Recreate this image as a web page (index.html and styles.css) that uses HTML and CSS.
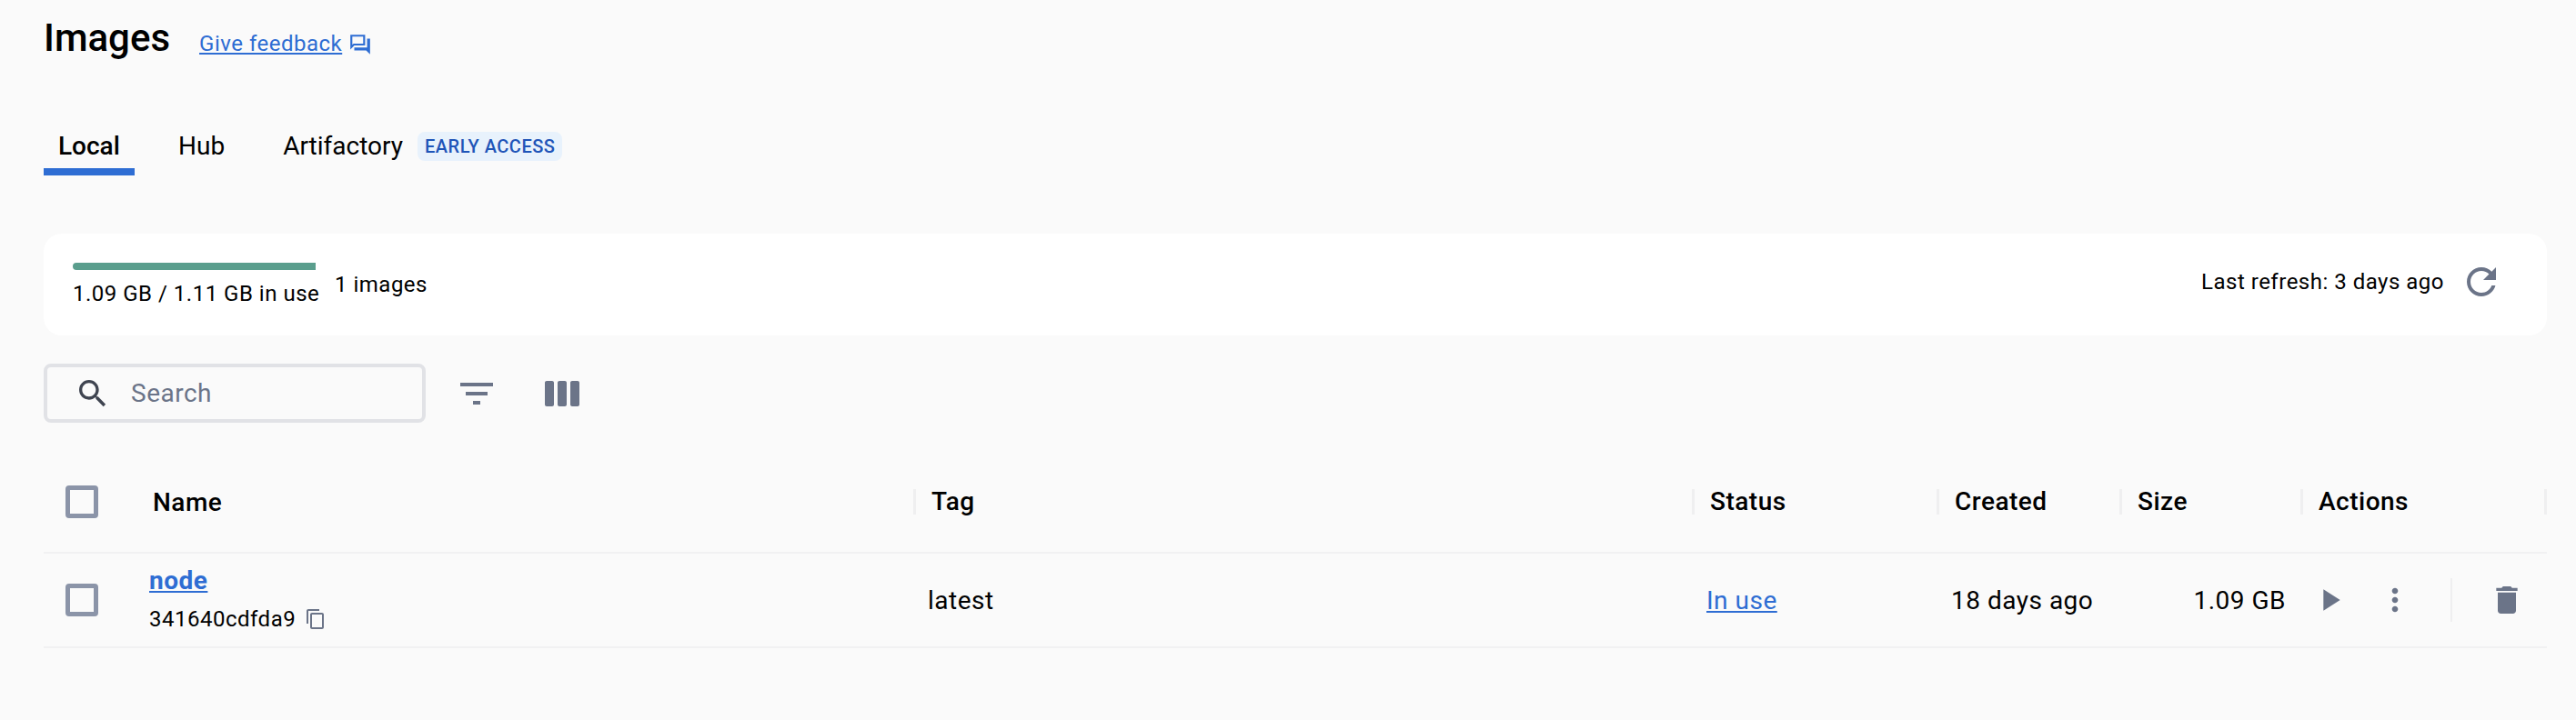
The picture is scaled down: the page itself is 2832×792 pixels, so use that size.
FILE: index.html
```html
<!DOCTYPE html>
<html lang="en">
<head>
<meta charset="utf-8">
<title>Images</title>
<link rel="stylesheet" href="styles.css">
</head>
<body>
<main class="page">
  <header class="title-row">
    <h1 class="title">Images</h1>
    <a class="feedback" href="#">Give feedback</a>
    <svg class="icon feedback-icon" viewBox="0 0 24 24"><path d="M15 4v7H5.17L4 12.17V4h11m2-2H2v15l4-4h11V2zm5 4h-3v9H6v3h12l4 4V6z"/></svg>
  </header>

  <nav class="tabs">
    <a class="tab tab-active" href="#">Local</a>
    <a class="tab" href="#">Hub</a>
    <a class="tab tab-last" href="#">Artifactory</a>
    <span class="badge">EARLY ACCESS</span>
  </nav>

  <section class="usage-card">
    <div class="usage">
      <div class="usage-bar"></div>
      <div class="usage-text">1.09 GB / 1.11 GB in use</div>
    </div>
    <div class="usage-count">1 images</div>
    <div class="refresh">
      <span class="refresh-text">Last refresh: 3 days ago</span>
      <svg class="icon refresh-icon" viewBox="0 0 24 24"><path d="M17.65 6.35C16.2 4.9 14.21 4 12 4c-4.42 0-7.99 3.58-7.99 8s3.57 8 7.99 8c3.73 0 6.84-2.55 7.73-6h-2.08c-.82 2.33-3.04 4-5.65 4-3.31 0-6-2.69-6-6s2.69-6 6-6c1.66 0 3.14.69 4.22 1.78L13 11h7V4l-2.35 2.35z"/></svg>
    </div>
  </section>

  <section class="toolbar">
    <div class="search">
      <svg class="icon search-icon" viewBox="0 0 24 24"><path d="M15.5 14h-.79l-.28-.27C15.41 12.59 16 11.11 16 9.5 16 5.91 13.09 3 9.5 3S3 5.91 3 9.5 5.91 16 9.5 16c1.61 0 3.09-.59 4.23-1.57l.27.28v.79l5 4.99L20.49 19l-4.99-5zm-6 0C7.01 14 5 11.99 5 9.5S7.01 5 9.5 5 14 7.01 14 9.5 11.99 14 9.5 14z"/></svg>
      <span class="search-text">Search</span>
    </div>
    <svg class="icon tool-icon" viewBox="0 0 24 24"><path d="M10 18h4v-2h-4v2zM3 6v2h18V6H3zm3 7h12v-2H6v2z"/></svg>
    <svg class="icon tool-icon tool-columns" viewBox="0 0 24 24"><path d="M6 5H3c-.55 0-1 .45-1 1v12c0 .55.45 1 1 1h3c.55 0 1-.45 1-1V6c0-.55-.45-1-1-1zm14 0h-3c-.55 0-1 .45-1 1v12c0 .55.45 1 1 1h3c.55 0 1-.45 1-1V6c0-.55-.45-1-1-1zm-7 0h-3c-.55 0-1 .45-1 1v12c0 .55.45 1 1 1h3c.55 0 1-.45 1-1V6c0-.55-.45-1-1-1z"/></svg>
  </section>

  <section class="table">
    <div class="row head-row">
      <div class="cell cell-check"><span class="checkbox"></span><span class="head-name">Name</span></div>
      <div class="cell head-cell">Tag</div>
      <div class="cell head-cell">Status</div>
      <div class="cell head-cell">Created</div>
      <div class="cell head-cell">Size</div>
      <div class="cell head-cell head-last">Actions</div>
    </div>
    <div class="row body-row">
      <div class="cell cell-check">
        <span class="checkbox"></span>
        <div class="name-block">
          <a class="name-link" href="#">node</a>
          <div class="image-id">341640cdfda9
            <svg class="icon copy-icon" viewBox="0 0 24 24"><path d="M16 1H4c-1.1 0-2 .9-2 2v14h2V3h12V1zm3 4H8c-1.1 0-2 .9-2 2v14c0 1.1.9 2 2 2h11c1.1 0 2-.9 2-2V7c0-1.1-.9-2-2-2zm0 16H8V7h11v14z"/></svg>
          </div>
        </div>
      </div>
      <div class="cell body-cell">latest</div>
      <div class="cell body-cell"><a class="status-link" href="#">In use</a></div>
      <div class="cell body-cell">18 days ago</div>
      <div class="cell body-cell cell-size">1.09 GB</div>
      <div class="cell cell-actions">
        <svg class="icon action-icon action-play" viewBox="0 0 24 24"><path d="M8 5v14l11-7z"/></svg>
        <svg class="icon action-icon action-more" viewBox="0 0 24 24"><path d="M12 8c1.1 0 2-.9 2-2s-.9-2-2-2-2 .9-2 2 .9 2 2 2zm0 2c-1.1 0-2 .9-2 2s.9 2 2 2 2-.9 2-2-.9-2-2-2zm0 6c-1.1 0-2 .9-2 2s.9 2 2 2 2-.9 2-2-.9-2-2-2z"/></svg>
        <span class="action-divider"></span>
        <svg class="icon action-icon action-delete" viewBox="0 0 24 24"><path d="M6 19c0 1.1.9 2 2 2h8c1.1 0 2-.9 2-2V7H6v12zM19 4h-3.5l-1-1h-5l-1 1H5v2h14V4z"/></svg>
      </div>
    </div>
  </section>
</main>
</body>
</html>
```
FILE: styles.css
```css
* { box-sizing: border-box; }
html, body { margin: 0; padding: 0; background: #fafafa; }
body { font-family: Roboto, "Liberation Sans", sans-serif; color: #000; height: 792px; overflow: hidden; }
a { color: #2e6dd3; }
.icon { display: block; fill: #6b7488; flex: none; }
.page { padding: 0 32px 0 48px; }

.title-row { display: flex; align-items: center; height: 84px; }
.title { margin: 0 32px 0 0; font-size: 42px; font-weight: 500; line-height: 84px; }
.feedback { font-size: 24px; letter-spacing: .5px; margin-top: 12px; }
.feedback-icon { width: 26px; height: 26px; fill: #2e6dd3; margin: 14px 0 0 7px; }

.tabs { display: flex; align-items: center; height: 64px; margin-top: 45px; }
.tab { font-size: 28px; color: #000; text-decoration: none; line-height: 64px; height: 64px; padding: 0 16px; margin-right: 32px; }
.tab-active { font-weight: 500; width: 100px; border-bottom: 8px solid #2e6dd3; }
.tab-last { padding-right: 0; margin: 0 16px 0 0; }
.badge { background: #e8f2fc; color: #1f55b8; font-size: 20px; font-weight: 500; letter-spacing: .5px; border-radius: 8px; padding: 0 8px; line-height: 32px; }

.usage-card { display: flex; align-items: flex-start; height: 112px; margin-top: 64px; padding: 32px 0 0 32px; background: #fff; border-radius: 20px; }
.usage { width: 284px; }
.usage-bar { width: 267px; height: 8px; background: #5a9e8d; border-radius: 4px 0 0 4px; }
.usage-text { font-size: 24px; letter-spacing: .5px; line-height: 36px; margin-top: 8px; white-space: nowrap; }
.usage-count { font-size: 24px; letter-spacing: .5px; line-height: 36px; margin-top: 6px; margin-left: 4px; }
.refresh { margin-left: auto; display: flex; align-items: center; margin-top: -3px; }
.refresh-text { font-size: 24px; letter-spacing: .5px; }
.refresh-icon { width: 48px; height: 48px; margin: 0 48px 0 17px; }

.toolbar { display: flex; align-items: center; margin-top: 31px; }
.search { display: flex; align-items: center; width: 420px; height: 65px; border: 4px solid #e1e2e6; border-radius: 8px; padding-left: 30px; }
.search-icon { width: 40px; height: 40px; fill: #3f4450; }
.search-text { font-size: 28px; letter-spacing: .5px; color: #6b7488; margin-left: 22px; }
.tool-icon { width: 48px; height: 48px; margin-left: 32px; }
.tool-columns { margin-left: 47px; }

.table { margin-top: 38px; }
.row { display: grid; grid-template-columns: 956px 856px 269px 201px 199px 271px; }
.head-row { height: 106px; border-bottom: 2px solid #f1f1f2; align-items: center; padding-bottom: 6px; }
.body-row { height: 104px; border-bottom: 2px solid #f1f1f2; align-items: center; }
.cell { font-size: 28px; letter-spacing: .5px; }
.cell-check { display: flex; align-items: center; padding-left: 24px; }
.checkbox { display: block; width: 36px; height: 36px; border: 5px solid #8b94a8; border-radius: 4px; flex: none; }
.head-name { font-weight: 500; margin-left: 60px; }
.head-cell { font-weight: 500; border-left: 3px solid #efeff0; padding-left: 17px; line-height: 28px; }
.head-last { border-right: 3px solid #efeff0; }
.name-block { margin-left: 56px; }
.name-link { font-weight: 700; display: block; line-height: 36px; }
.image-id { display: flex; align-items: center; font-size: 24px; line-height: 36px; margin-top: 6px; }
.copy-icon { width: 24px; height: 24px; margin-left: 10px; }
.body-cell { padding-left: 16px; }
.cell-size { text-align: right; padding: 0 16px 0 0; }
.cell-actions { display: flex; align-items: center; }
.action-icon { width: 40px; height: 40px; }
.action-play { margin-left: 12px; }
.action-more { margin-left: 32px; }
.action-delete { width: 40px; height: 40px; margin-left: 40px; }
.action-divider { width: 2px; height: 48px; background: #efeff0; margin-left: 41px; }
```
